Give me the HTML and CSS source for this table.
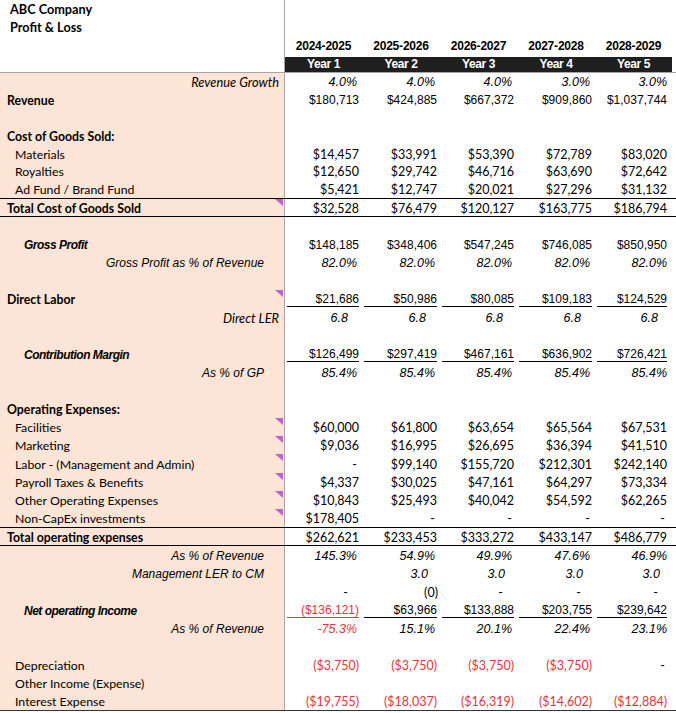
FILE: index.html
```html
<!DOCTYPE html>
<html>
<head>
<meta charset="utf-8">
<link rel="stylesheet" href="styles.css">
</head>
<body>
<div class="sheet">
  <div class="head">
    <div class="title"><div>ABC Company</div><div>Profit &amp; Loss</div></div>
    <div class="yr"><span class="date">2024-2025</span><span class="bar">Year 1</span></div>
    <div class="yr"><span class="date">2025-2026</span><span class="bar">Year 2</span></div>
    <div class="yr"><span class="date">2026-2027</span><span class="bar">Year 3</span></div>
    <div class="yr"><span class="date">2027-2028</span><span class="bar">Year 4</span></div>
    <div class="yr"><span class="date">2028-2029</span><span class="bar">Year 5</span></div>
    <div class="fill"></div>
  </div>

  <div class="row r18">
    <div class="lbl ri">Revenue Growth</div>
    <div class="v ai">4.0%</div><div class="v ai">4.0%</div><div class="v ai">4.0%</div><div class="v ai">3.0%</div><div class="v ai">3.0%</div><div class="fill"></div>
  </div>
  <div class="row r18">
    <div class="lbl b">Revenue</div>
    <div class="v a">$180,713</div><div class="v a">$424,885</div><div class="v a">$667,372</div><div class="v a">$909,860</div><div class="v a">$1,037,744</div><div class="fill"></div>
  </div>
  <div class="row r18">
    <div class="lbl"></div>
    <div class="v"></div><div class="v"></div><div class="v"></div><div class="v"></div><div class="v"></div><div class="fill"></div>
  </div>
  <div class="row r18">
    <div class="lbl b">Cost of Goods Sold:</div>
    <div class="v"></div><div class="v"></div><div class="v"></div><div class="v"></div><div class="v"></div><div class="fill"></div>
  </div>
  <div class="row r18">
    <div class="lbl ind">Materials</div>
    <div class="v">$14,457</div><div class="v">$33,991</div><div class="v">$53,390</div><div class="v">$72,789</div><div class="v">$83,020</div><div class="fill"></div>
  </div>
  <div class="row r18">
    <div class="lbl ind">Royalties</div>
    <div class="v">$12,650</div><div class="v">$29,742</div><div class="v">$46,716</div><div class="v">$63,690</div><div class="v">$72,642</div><div class="fill"></div>
  </div>
  <div class="row r18">
    <div class="lbl ind">Ad Fund / Brand Fund</div>
    <div class="v">$5,421</div><div class="v">$12,747</div><div class="v">$20,021</div><div class="v">$27,296</div><div class="v">$31,132</div><div class="fill"></div>
  </div>
  <div class="row total">
    <div class="lbl b mk">Total Cost of Goods Sold</div>
    <div class="v">$32,528</div><div class="v">$76,479</div><div class="v">$120,127</div><div class="v">$163,775</div><div class="v">$186,794</div><div class="fill"></div>
  </div>
  <div class="row">
    <div class="lbl"></div>
    <div class="v"></div><div class="v"></div><div class="v"></div><div class="v"></div><div class="v"></div><div class="fill"></div>
  </div>
  <div class="row">
    <div class="lbl bi">Gross Profit</div>
    <div class="v a">$148,185</div><div class="v a">$348,406</div><div class="v a">$547,245</div><div class="v a">$746,085</div><div class="v a">$850,950</div><div class="fill"></div>
  </div>
  <div class="row">
    <div class="lbl ria">Gross Profit as % of Revenue</div>
    <div class="v ai">82.0%</div><div class="v ai">82.0%</div><div class="v ai">82.0%</div><div class="v ai">82.0%</div><div class="v ai">82.0%</div><div class="fill"></div>
  </div>
  <div class="row">
    <div class="lbl"></div>
    <div class="v"></div><div class="v"></div><div class="v"></div><div class="v"></div><div class="v"></div><div class="fill"></div>
  </div>
  <div class="row">
    <div class="lbl b mk">Direct Labor</div>
    <div class="v a"><span class="u">$21,686</span></div><div class="v a"><span class="u">$50,986</span></div><div class="v a"><span class="u">$80,085</span></div><div class="v a"><span class="u">$109,183</span></div><div class="v a"><span class="u">$124,529</span></div><div class="fill"></div>
  </div>
  <div class="row">
    <div class="lbl ri">Direct LER</div>
    <div class="v ai p14">6.8</div><div class="v ai p14">6.8</div><div class="v ai p14">6.8</div><div class="v ai p14">6.8</div><div class="v ai p14">6.8</div><div class="fill"></div>
  </div>
  <div class="row">
    <div class="lbl"></div>
    <div class="v"></div><div class="v"></div><div class="v"></div><div class="v"></div><div class="v"></div><div class="fill"></div>
  </div>
  <div class="row">
    <div class="lbl bi">Contribution Margin</div>
    <div class="v a"><span class="u">$126,499</span></div><div class="v a"><span class="u">$297,419</span></div><div class="v a"><span class="u">$467,161</span></div><div class="v a"><span class="u">$636,902</span></div><div class="v a"><span class="u">$726,421</span></div><div class="fill"></div>
  </div>
  <div class="row">
    <div class="lbl ria">As % of GP</div>
    <div class="v ai">85.4%</div><div class="v ai">85.4%</div><div class="v ai">85.4%</div><div class="v ai">85.4%</div><div class="v ai">85.4%</div><div class="fill"></div>
  </div>
  <div class="row">
    <div class="lbl"></div>
    <div class="v"></div><div class="v"></div><div class="v"></div><div class="v"></div><div class="v"></div><div class="fill"></div>
  </div>
  <div class="row">
    <div class="lbl b">Operating Expenses:</div>
    <div class="v"></div><div class="v"></div><div class="v"></div><div class="v"></div><div class="v"></div><div class="fill"></div>
  </div>
  <div class="row">
    <div class="lbl ind mk">Facilities</div>
    <div class="v">$60,000</div><div class="v">$61,800</div><div class="v">$63,654</div><div class="v">$65,564</div><div class="v">$67,531</div><div class="fill"></div>
  </div>
  <div class="row">
    <div class="lbl ind mk">Marketing</div>
    <div class="v">$9,036</div><div class="v">$16,995</div><div class="v">$26,695</div><div class="v">$36,394</div><div class="v">$41,510</div><div class="fill"></div>
  </div>
  <div class="row">
    <div class="lbl ind mk">Labor - (Management and Admin)</div>
    <div class="v d5">-</div><div class="v">$99,140</div><div class="v">$155,720</div><div class="v">$212,301</div><div class="v">$242,140</div><div class="fill"></div>
  </div>
  <div class="row">
    <div class="lbl ind mk">Payroll Taxes &amp; Benefits</div>
    <div class="v">$4,337</div><div class="v">$30,025</div><div class="v">$47,161</div><div class="v">$64,297</div><div class="v">$73,334</div><div class="fill"></div>
  </div>
  <div class="row">
    <div class="lbl ind mk">Other Operating Expenses</div>
    <div class="v">$10,843</div><div class="v">$25,493</div><div class="v">$40,042</div><div class="v">$54,592</div><div class="v">$62,265</div><div class="fill"></div>
  </div>
  <div class="row">
    <div class="lbl ind mk">Non-CapEx investments</div>
    <div class="v">$178,405</div><div class="v d5">-</div><div class="v d5">-</div><div class="v d5">-</div><div class="v d5">-</div><div class="fill"></div>
  </div>
  <div class="row total">
    <div class="lbl b">Total operating expenses</div>
    <div class="v">$262,621</div><div class="v">$233,453</div><div class="v">$333,272</div><div class="v">$433,147</div><div class="v">$486,779</div><div class="fill"></div>
  </div>
  <div class="row">
    <div class="lbl ria">As % of Revenue</div>
    <div class="v ai">145.3%</div><div class="v ai">54.9%</div><div class="v ai">49.9%</div><div class="v ai">47.6%</div><div class="v ai">46.9%</div><div class="fill"></div>
  </div>
  <div class="row">
    <div class="lbl ria">Management LER to CM</div>
    <div class="v ai p14"></div><div class="v ai p12">3.0</div><div class="v ai p12">3.0</div><div class="v ai p12">3.0</div><div class="v ai p12">3.0</div><div class="fill"></div>
  </div>
  <div class="row">
    <div class="lbl"></div>
    <div class="v p14">-</div><div class="v p2">(0)</div><div class="v p14">-</div><div class="v p14">-</div><div class="v p14">-</div><div class="fill"></div>
  </div>
  <div class="row">
    <div class="lbl bi">Net operating Income</div>
    <div class="v a red"><span class="u">($136,121)</span></div><div class="v a"><span class="u">$63,966</span></div><div class="v a"><span class="u">$133,888</span></div><div class="v a"><span class="u">$203,755</span></div><div class="v a"><span class="u">$239,642</span></div><div class="fill"></div>
  </div>
  <div class="row">
    <div class="lbl ria">As % of Revenue</div>
    <div class="v ai red">-75.3%</div><div class="v ai">15.1%</div><div class="v ai">20.1%</div><div class="v ai">22.4%</div><div class="v ai">23.1%</div><div class="fill"></div>
  </div>
  <div class="row">
    <div class="lbl"></div>
    <div class="v"></div><div class="v"></div><div class="v"></div><div class="v"></div><div class="v"></div><div class="fill"></div>
  </div>
  <div class="row">
    <div class="lbl ind">Depreciation</div>
    <div class="v red">($3,750)</div><div class="v red">($3,750)</div><div class="v red">($3,750)</div><div class="v red">($3,750)</div><div class="v d5">-</div><div class="fill"></div>
  </div>
  <div class="row">
    <div class="lbl ind">Other Income (Expense)</div>
    <div class="v"></div><div class="v"></div><div class="v"></div><div class="v"></div><div class="v"></div><div class="fill"></div>
  </div>
  <div class="row last">
    <div class="lbl ind">Interest Expense</div>
    <div class="v red">($19,755)</div><div class="v red">($18,037)</div><div class="v red">($16,319)</div><div class="v red">($14,602)</div><div class="v red">($12,884)</div><div class="fill"></div>
  </div>
</div>
</body>
</html>
```
FILE: styles.css
```css
* { box-sizing: border-box; }
html, body { margin: 0; padding: 0; background: #fff; }
body { width: 676px; height: 713px; overflow: hidden; color: #000; font-family: "Lato", "Liberation Sans", sans-serif; }

.sheet { width: 676px; }

.head, .row {
  display: grid;
  grid-template-columns: 285px 77px 78px 77px 78px 77px 1fr;
}

.head { height: 73px; border-bottom: 1px solid #a6a6a6; }

.title {
  border-right: 1px solid #a6a6a6;
  padding-left: 10px;
  font-family: "Lato", sans-serif;
  font-weight: 700;
  font-size: 12.7px;
  line-height: 18px;
}

.yr {
  display: flex;
  flex-direction: column;
  justify-content: flex-end;
  align-items: stretch;
  text-align: center;
}
.date {
  font-family: "Liberation Sans", Arial, sans-serif;
  font-weight: 700;
  font-size: 12px;
  line-height: 18px;
  margin-bottom: 2px;
  letter-spacing: -0.2px;
}
.bar {
  background: #1f1f1f;
  color: #fff;
  font-family: "Liberation Sans", Arial, sans-serif;
  font-weight: 700;
  font-size: 12px;
  letter-spacing: -0.4px;
  line-height: 15px;
  height: 15px;
}

.row { height: 18.25px; }
.row.r18 { height: 17.9px; }
.row.total { border-top: 1px solid #000; border-bottom: 1px solid #000; height: 19px; }
.row.last { border-bottom: 1px solid #333; height: 19px; }

.lbl {
  position: relative;
  background: #fce4d6;
  border-right: 1px solid #a6a6a6;
  display: flex;
  align-items: center;
  padding-left: 7px;
  padding-top: 1px;
  font-size: 12.3px;
  white-space: nowrap;
}
.lbl.b { font-weight: 700; }
.lbl.ind { padding-left: 15px; }
.lbl.bi {
  font-family: "Liberation Sans", Arial, sans-serif;
  font-weight: 700;
  font-style: italic;
  font-size: 12px;
  padding-left: 24px;
  letter-spacing: -0.5px;
}
.lbl.ri { justify-content: flex-end; font-style: italic; font-size: 12.8px; padding-right: 5px; }
.lbl.ria {
  justify-content: flex-end;
  font-family: "Liberation Sans", Arial, sans-serif;
  font-style: italic;
  font-size: 12px;
  padding-right: 20px;
}

.lbl.mk::after {
  content: "";
  position: absolute;
  top: 0;
  right: 1px;
  border-top: 7px solid #b865cc;
  border-left: 8px solid transparent;
}

.v {
  display: flex;
  align-items: center;
  justify-content: flex-end;
  padding-right: 3px;
  padding-top: 1px;
  font-size: 12.5px;
  white-space: nowrap;
}
.row > .v:nth-child(6) { padding-right: 5px; }

.v.a { font-family: "Liberation Sans", Arial, sans-serif; font-size: 12px; }
.v.ai { font-family: "Liberation Sans", Arial, sans-serif; font-style: italic; font-size: 12.5px; padding-right: 5px; }
.row > .v.ai:nth-child(6) { padding-right: 5px; }
.v.p14, .row > .v.p14:nth-child(6) { padding-right: 14px; }
.v.p12, .row > .v.p12:nth-child(6) { padding-right: 12px; }
.v.p2 { padding-right: 2px; }
.v.d5 { padding-right: 5px; }
.row > .v.d5:nth-child(6) { padding-right: 7px; }

.v.red { color: #e0353a; }

.v .u {
  display: block;
  flex: 1;
  margin: 0 0 0 2px;
  text-align: right;
  line-height: 14px;
  border-bottom: 1px solid #000;
}
.v.red .u { border-bottom-color: #e0353a; }
```
